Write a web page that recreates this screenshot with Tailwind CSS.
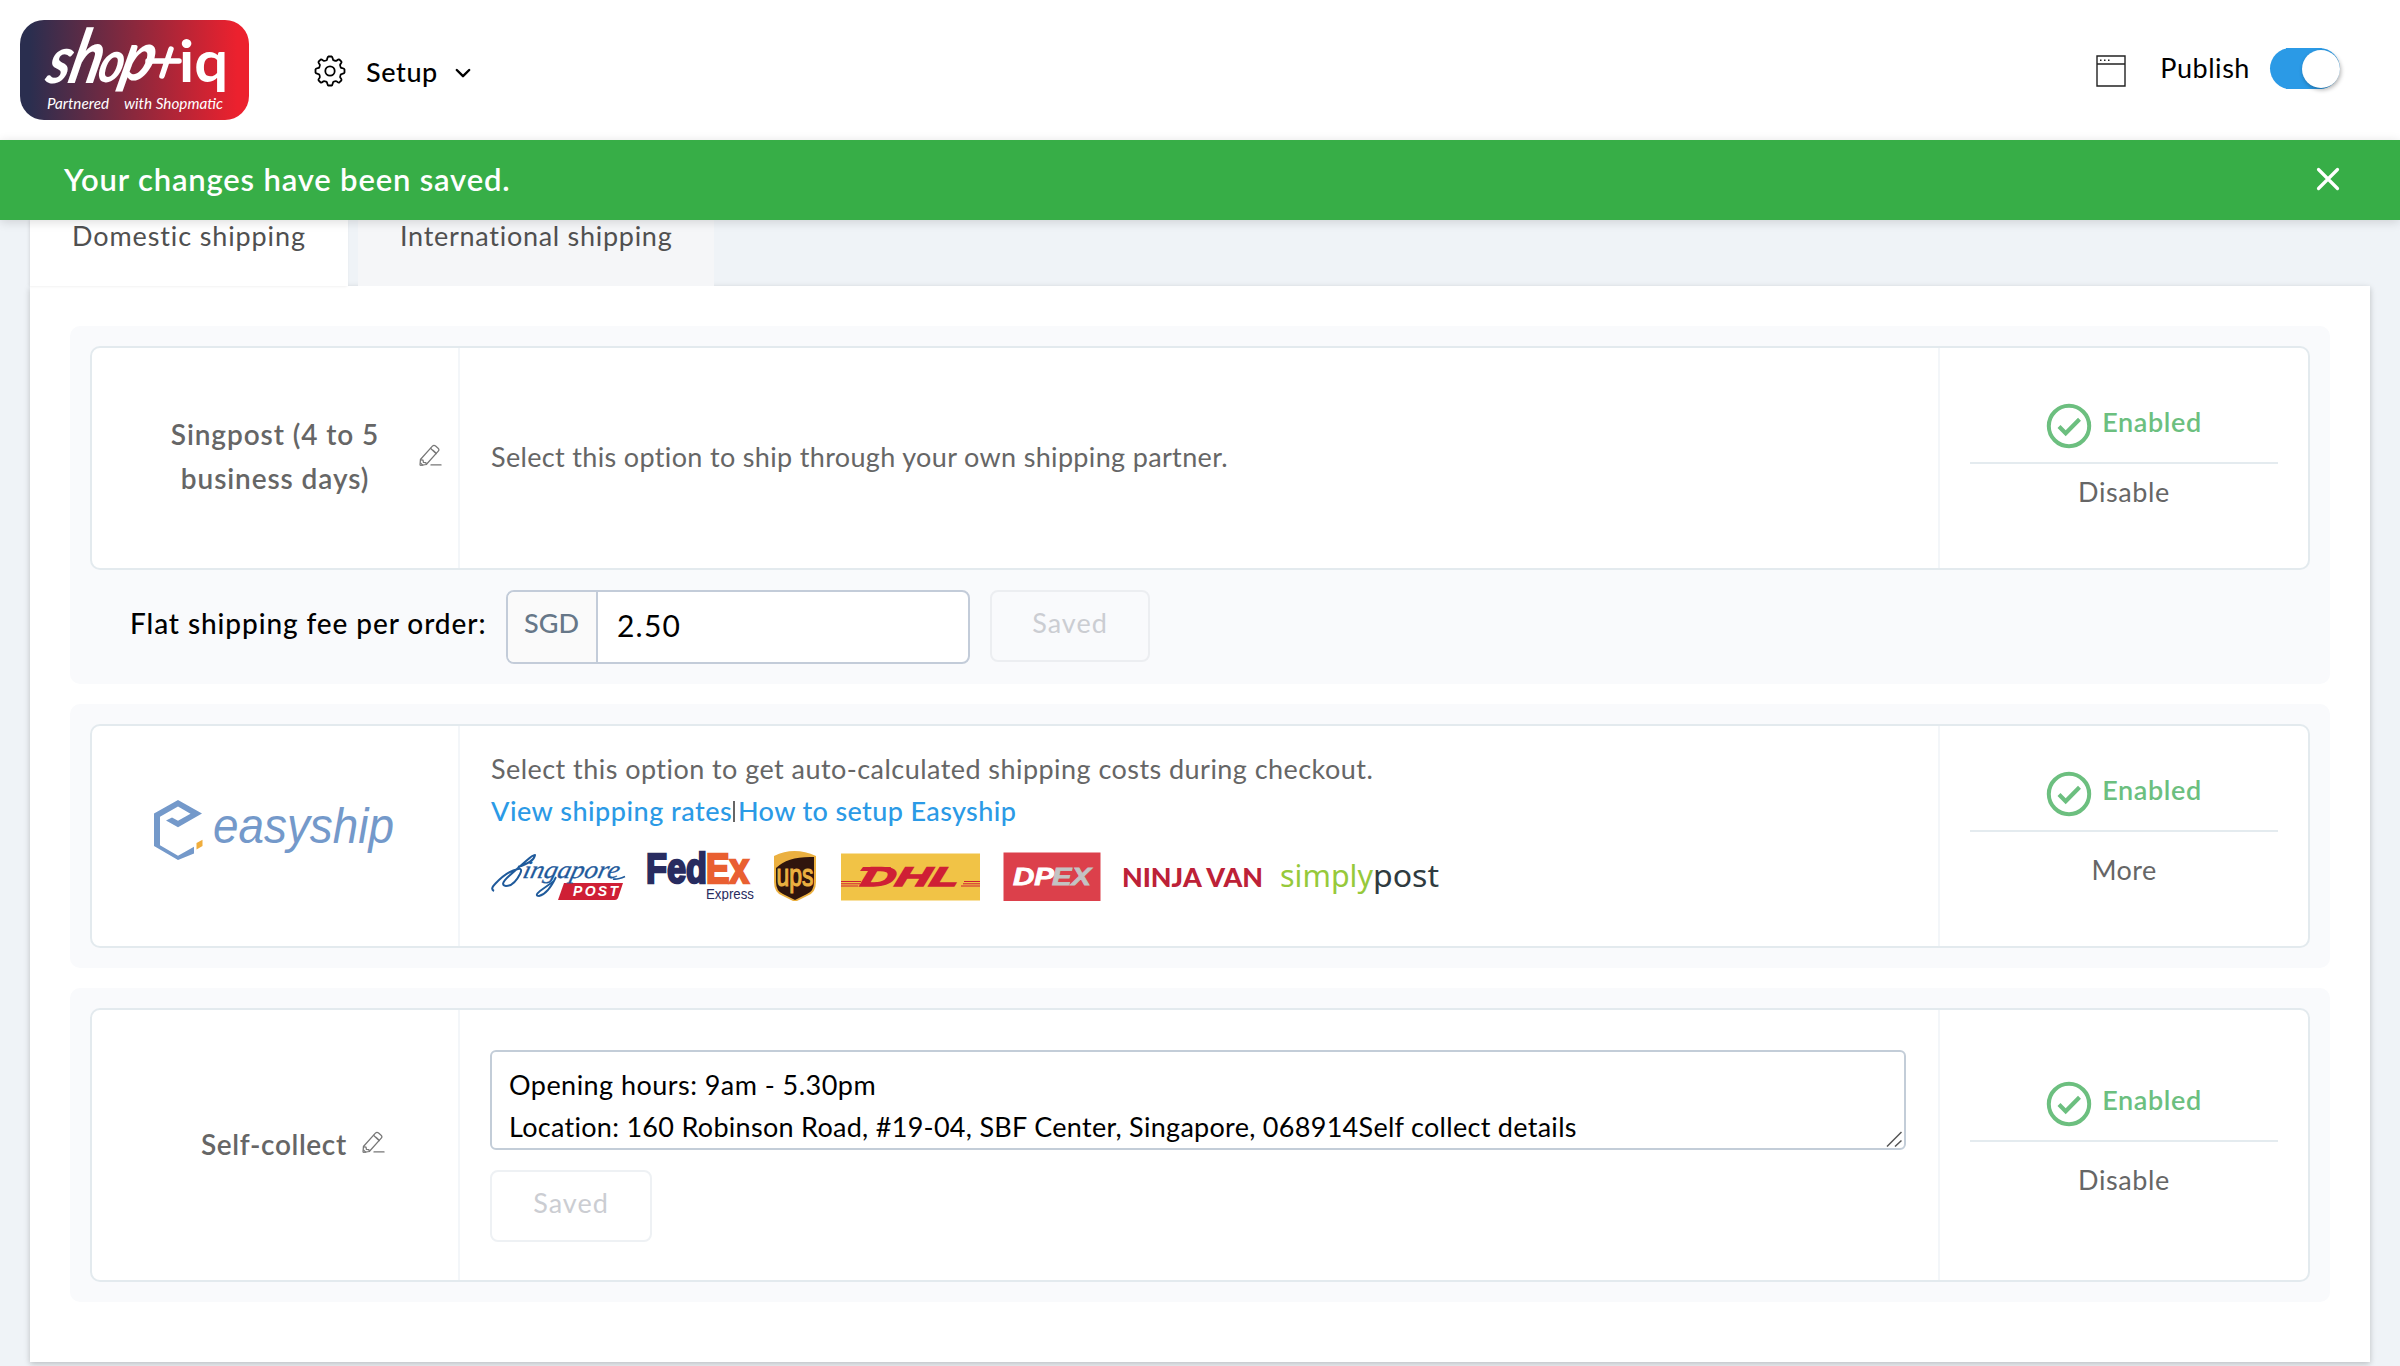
<!DOCTYPE html>
<html lang="en">
<head>
<meta charset="utf-8">
<title>Shipping setup</title>
<script src="https://cdn.jsdelivr.net/npm/@tailwindcss/browser@4"></script>
</head>
<body class="w-[2400px] h-[1366px] overflow-hidden bg-[#eff3f7] font-[Lato,sans-serif] text-[27px] leading-[42px] text-[#666]">

<!-- shared icons -->
<svg class="hidden">
  <symbol id="pencil" viewBox="0 0 24 24">
    <g fill="none" stroke="#777" stroke-width="1.3" stroke-linejoin="round" stroke-linecap="round">
      <path d="M1.5 16.2 14 2.2q1.6-1.6 3.3-.1l2.6 2.3q1.6 1.5.2 3.1L7.6 21.4l-5.8.9q-.8 0-.7-.8z"/>
      <path d="M12 4.500l6 5.600M14.600 6.600l3.400 3M2 16.600l2.200.3.400 2.200 2.600.3.300 2M1.800 20l2 2M12.500 21.800h10.500"/>
    </g>
  </symbol>
  <symbol id="check" viewBox="0 0 46 46">
    <circle cx="23" cy="23" r="20.2" fill="none" stroke="#6cbf7f" stroke-width="4"/>
    <path d="M13 23.5l6.7 6.7L33.5 16.3" fill="none" stroke="#6cbf7f" stroke-width="4.2"/>
  </symbol>
</svg>

<header class="h-[140px] bg-white flex items-start">
  <svg class="ml-5 mt-5 w-[229px] h-[100px] shrink-0" viewBox="20 20 229 100">
    <defs><linearGradient id="lg"><stop offset=".04" stop-color="#2a2e4f"/><stop offset=".5" stop-color="#8b283d"/><stop offset=".95" stop-color="#ec212e"/></linearGradient></defs>
    <rect x="20" y="20" width="229" height="100" rx="24" fill="url(#lg)"/>
    <g fill="#fff" font-family="Lato, sans-serif">
      <g font-style="italic" font-weight="700" transform="translate(20 0) skewX(-14)">
        <text x="45" y="83" font-size="66" textLength="23" lengthAdjust="spacingAndGlyphs">s</text>
        <text x="67" y="83" font-size="75" textLength="32" lengthAdjust="spacingAndGlyphs">h</text>
        <text x="96" y="82" font-size="58" textLength="25" lengthAdjust="spacingAndGlyphs">o</text>
        <text x="118" y="80" font-size="68" textLength="33" lengthAdjust="spacingAndGlyphs">p</text>
      </g>
      <path d="M148 61h31M171 49l-9 27" stroke="#fff" stroke-width="5.500" stroke-linecap="round" fill="none"/>
      <text x="179" y="82" font-size="58" font-weight="700" textLength="49" lengthAdjust="spacingAndGlyphs">iq</text>
      <text x="47" y="108.500" font-size="15.500" font-style="italic" textLength="62" lengthAdjust="spacingAndGlyphs">Partnered</text>
      <text x="124" y="108.500" font-size="15.500" font-style="italic" textLength="99" lengthAdjust="spacingAndGlyphs">with Shopmatic</text>
    </g>
  </svg>
  <svg class="ml-[65px] mt-[55px] size-8 shrink-0" viewBox="0 0 32 32" fill="none" stroke="#000" stroke-width="1.800">
    <path d="M12.600 5.200C13.400 4.800 13 1.800 14.500 1.500h3C19 1.800 18.600 4.800 19.400 5.200C21 5.800 21.800 6.200 22.500 5.800C23.600 5 24.200 4 25.400 4.600L27.400 6.600C28.200 7.800 26.600 8.600 26.200 9.500C25.800 10.300 26.300 11.500 26.800 12.600C27.200 13.400 30.200 13 30.500 14.500v3C30.200 19 27.200 18.600 26.800 19.400C26.200 21 25.800 21.800 26.200 22.500C27 23.600 28 24.200 27.400 25.400L25.400 27.400C24.200 28.200 23.400 26.600 22.500 26.200C21.700 25.800 20.500 26.300 19.400 26.800C18.600 27.200 19 30.200 17.500 30.500h-3C13 30.200 13.400 27.200 12.600 26.800C11 26.200 10.200 25.800 9.500 26.200C8.400 27 7.800 28 6.600 27.400L4.600 25.400C3.800 24.200 5.400 23.400 5.800 22.500C6.200 21.700 5.700 20.500 5.200 19.400C4.800 18.600 1.800 19 1.500 17.500v-3C1.800 13 4.800 13.400 5.200 12.600C5.800 11 6.200 10.200 5.800 9.500C5 8.400 4 7.800 4.600 6.600L6.600 4.600C7.800 3.800 8.600 5.400 9.500 5.800C10.300 6.200 11.500 5.700 12.600 5.200z"/>
    <circle cx="16" cy="16" r="4.700"/>
  </svg>
  <span class="ml-5 mt-[51px] text-black font-medium text-[27px] tracking-[0.6px]">Setup</span>
  <svg class="ml-[17px] mt-[67px] w-4 h-3" viewBox="0 0 16 12" fill="none" stroke="#000" stroke-width="2.400" stroke-linecap="round" stroke-linejoin="round"><path d="M1.800 3l6.200 6.200L14.200 3"/></svg>
  <div class="flex-1"></div>
  <svg class="mt-[55px] w-[30px] h-8" viewBox="0 0 30 32" fill="none" stroke="#222" stroke-width="1.400"><path d="M1 1h28v30H1zM1 9h28"/><path d="M4 5.300h1.500M8 5.300h1.500M12 5.300h1.500" stroke-width="1.600"/></svg>
  <span class="ml-[34px] mt-[47px] text-black text-[27px] tracking-[0.550px]">Publish</span>
  <div class="ml-[20px] mt-12 mr-[60px] w-[70px] h-[41px] flex justify-end items-center rounded-full bg-linear-to-r from-[#2b9ae6] from-75% to-transparent to-75%">
    <div class="w-[54px] h-[41px] -ml-8 rounded-r-full bg-[#2b9ae6] mr-[-38px]"></div>
    <div class="size-[38px] rounded-full bg-white shadow-[1px_2px_4px_rgba(0,0,0,0.3)] shrink-0"></div>
  </div>
</header>

<div class="relative z-10 h-20 bg-[#37ae47] shadow-[0_2px_10px_rgba(0,0,0,0.14)] flex items-center justify-between pl-16 pr-[60px] text-white">
  <span class="text-[31px] font-semibold tracking-[0.82px] -mt-[3px]">Your changes have been saved.</span>
  <svg class="size-6 -mt-[3px]" viewBox="0 0 24 24" stroke="#fff" stroke-width="3.200" stroke-linecap="round"><path d="M2.500 2.500l19 19M21.500 2.500l-19 19"/></svg>
</div>

<nav class="h-[66px] ml-[30px] flex gap-[10px] text-[#505050]">
  <div class="w-[318px] bg-white pl-[42px] shadow-[-1px_0_3px_rgba(0,0,0,0.1)]"><span class="block -mt-[5px] tracking-[0.880px]">Domestic shipping</span></div>
  <div class="w-[356px] bg-[#f5f6f8] pl-[42px]"><span class="block -mt-[5px] tracking-[0.72px]">International shipping</span></div>
</nav>

<main class="mx-[30px] h-[1076px] bg-white shadow-[0_2px_6px_rgba(0,0,0,0.22)] px-10 pt-10 flex flex-col gap-5">

  <section class="h-[358px] bg-[#f9fafc] rounded-[10px] p-5 shrink-0">
    <div class="h-[224px] flex rounded-[10px] border-2 border-[#e3eaee] bg-white overflow-hidden">
      <div class="w-[368px] border-r-2 border-[#f3f6f9] flex items-center relative">
        <p class="w-full -mt-[5px] text-center text-[28px] leading-[44px] font-semibold tracking-[0.9px]">Singpost (4 to 5<br>business days)</p>
        <svg class="absolute left-[327px] top-[96px] w-[23px] h-[23px]"><use href="#pencil"/></svg>
      </div>
      <div class="flex-1 pl-[31px] flex items-center"><span class="-mt-[3px] tracking-[0.34px]">Select this option to ship through your own shipping partner.</span></div>
      <div class="w-[370px] border-l-2 border-[#f3f6f9] px-[30px] pt-[46px] text-center">
        <div class="h-[70px] border-b-2 border-[#e4ebef] flex justify-center items-start gap-[10px] text-[#6cbf7f] font-semibold tracking-[0.6px]"><svg class="size-[46px] mt-[9px]"><use href="#check"/></svg><span class="mt-[7px]">Enabled</span></div>
        <div class="mt-[7px] tracking-[0.6px]">Disable</div>
      </div>
    </div>
    <div class="mt-5 ml-[40px] flex items-start">
      <span class="w-[376px] mt-[12px] text-[28px] font-medium text-black tracking-[0.92px]">Flat shipping fee per order:</span>
      <div class="w-[464px] h-[74px] flex rounded-[8px] border-2 border-[#c3ccd9] bg-white overflow-hidden">
        <div class="w-[90px] bg-[#fafafa] border-r-2 border-[#c3ccd9] text-[#667788] text-center font-medium pt-[10px] pr-px">SGD</div>
        <div class="pl-[19px] pt-[12px] text-black text-[30px] tracking-[1.200px]">2.50</div>
      </div>
      <div class="ml-5 w-40 h-[72px] rounded-[8px] border-2 border-[#eceef1] text-[#cbcdd2] text-center pt-[10px] tracking-[1px]">Saved</div>
    </div>
  </section>

  <section class="h-[264px] bg-[#f9fafc] rounded-[10px] p-5 shrink-0">
    <div class="h-[224px] flex rounded-[10px] border-2 border-[#e3eaee] bg-white overflow-hidden">
      <div class="w-[368px] border-r-2 border-[#f3f6f9] pl-[62px] pt-[74px]">
        <svg class="w-[242px] h-[62px]" viewBox="154 800 242 62">
          <path fill="#7499ca" d="M178 800l24 13.500-24 13.800-12-6.800 6-3 6 3.200 12.500-7-12.500-7.200-18 10.300v28.400l18 10.600 16-9v6.700L178 860l-24-14v-32.500z"/>
          <path fill="#f0ad3c" d="M196.500 843l6-3.300v6.300l-6 3.400z"/>
          <text x="213" y="843" font-family="'Liberation Sans', sans-serif" font-style="italic" font-size="50" fill="#7499ca" textLength="181" lengthAdjust="spacingAndGlyphs">easyship</text>
        </svg>
      </div>
      <div class="flex-1 pl-[31px] pt-[22px]">
        <div class="tracking-[0.45px]">Select this option to get auto-calculated shipping costs during checkout.</div>
        <div class="flex"><span class="text-[#2b9ae6] font-medium tracking-[0.500px] w-[242px]">View shipping rates</span><span class="w-[5px] mt-[11px] mb-[10px]"><span class="block w-[2px] h-full bg-[#666]"></span></span><span class="text-[#2b9ae6] font-medium tracking-[0.370px]">How to setup Easyship</span></div>
        <svg class="mt-[17px] -ml-px w-[950px] h-[52px]" viewBox="490 850 950 52">
          <g font-family="'Liberation Sans', sans-serif" font-weight="700">
            <!-- Singapore Post -->
            <path fill="#cf1f35" d="M564 884h59l-5 15q-1 2-3 2h-57z"/>
            <path d="M494 892q-4-2 1-7q12-13 23-15q5-1 2 5q-6 12-14 12q-7-1 3-10l17-15q8-7 9-6q-1 7-17 12" fill="none" stroke="#1f5a9b" stroke-width="2"/>
            <text x="521" y="879" font-family="'Liberation Serif', serif" font-weight="400" font-style="italic" font-size="25" fill="#1f5a9b" stroke="#1f5a9b" stroke-width=".3" textLength="96" lengthAdjust="spacingAndGlyphs" transform="translate(220 0) skewX(-14)">ingapore</text>
            <path d="M613 880q4 1 12-2.500M556 878q-8 17-17 19q-5 0 1-5l14-10" fill="none" stroke="#1f5a9b" stroke-width="1.800"/>
            <text x="573" y="897" font-style="italic" font-size="14" fill="#fff" textLength="45">POST</text>
            <!-- FedEx -->
            <text x="646" y="884" font-size="43" fill="#282c60" stroke="#282c60" stroke-width="2.400" textLength="61" lengthAdjust="spacingAndGlyphs">Fed</text>
            <text x="706" y="884" font-size="43" fill="#e95f31" stroke="#e95f31" stroke-width="2.400" textLength="43" lengthAdjust="spacingAndGlyphs">Ex</text>
            <text x="706" y="900" font-size="15" font-weight="400" fill="#282c60" textLength="48" lengthAdjust="spacingAndGlyphs">Express</text>
            <!-- UPS -->
            <path fill="#ebb040" d="M774 857q20-10 42 0v26q0 11-9 14l-12 6-12-6q-9-3-9-14z"/>
            <path fill="#30150d" d="M776 869q12-12 38-11v25q0 9-7 12l-12 6-12-6q-7-3-7-12z"/>
            <text x="776.500" y="886.500" font-size="32" font-weight="400" fill="#ebb040" stroke="#ebb040" stroke-width="1.200" textLength="37" lengthAdjust="spacingAndGlyphs">ups</text>
            <!-- DHL -->
            <rect x="841" y="854.500" width="139" height="47" fill="#f1c346"/>
            <path stroke="#cf1f35" stroke-width="1" d="M841 882.500h20M841 884.800h19M841 887h17M964 882.500h16M963 884.800h17M961 887h19"/>
            <text x="860" y="887" font-style="italic" font-size="27" fill="#cf1f35" stroke="#cf1f35" stroke-width="1.400" textLength="98" lengthAdjust="spacingAndGlyphs" transform="translate(237 0) skewX(-15)">DHL</text>
            <path fill="#cf1f35" d="M863 868h28l-2 4h-29z"/>
            <!-- DPEX -->
            <rect x="1003.500" y="853.500" width="97" height="49" fill="#dc404b"/>
            <g font-style="italic" font-size="23.500" stroke-width=".8"><text x="1013" y="885.500" fill="#fff" stroke="#fff" textLength="41" lengthAdjust="spacingAndGlyphs">DP</text>
            <text x="1052" y="885.500" fill="#c3c3c3" stroke="#c3c3c3" textLength="39" lengthAdjust="spacingAndGlyphs">EX</text></g>
            <!-- Ninja Van -->
            <text x="1122" y="887.500" font-family="Lato, sans-serif" font-weight="900" font-size="27" fill="#bd2137" textLength="141" lengthAdjust="spacingAndGlyphs">NINJA VAN</text>
            <!-- simplypost -->
            <g font-family="'Noto Sans', sans-serif" font-weight="400" font-size="31"><text x="1280" y="887.500" fill="#96c93b" textLength="93" lengthAdjust="spacingAndGlyphs">simply</text>
            <text x="1373" y="887.500" fill="#2f3b40" textLength="66" lengthAdjust="spacingAndGlyphs">post</text></g>
          </g>
        </svg>
      </div>
      <div class="w-[370px] border-l-2 border-[#f3f6f9] px-[30px] pt-[36px] text-center">
        <div class="h-[70px] border-b-2 border-[#e4ebef] flex justify-center items-start gap-[10px] text-[#6cbf7f] font-semibold tracking-[0.6px]"><svg class="size-[46px] mt-[9px]"><use href="#check"/></svg><span class="mt-[7px]">Enabled</span></div>
        <div class="mt-[17px] tracking-[0.4px]">More</div>
      </div>
    </div>
  </section>

  <section class="h-[314px] bg-[#f9fafc] rounded-[10px] p-5 shrink-0">
    <div class="h-[274px] flex rounded-[10px] border-2 border-[#e3eaee] bg-white overflow-hidden">
      <div class="w-[368px] border-r-2 border-[#f3f6f9] flex items-center pl-[109px] gap-[15px] text-[28px] font-semibold tracking-[0.63px]">
        <span class="-mt-[3px]">Self-collect</span>
        <svg class="w-[23px] h-[23px] -mt-[5px]"><use href="#pencil"/></svg>
      </div>
      <div class="flex-1 pl-[30px] pt-10">
        <div class="relative w-[1416px] h-[100px] rounded-[6px] border-2 border-[#c3cdd8] pl-[17px] pt-[12px] text-black">
          <div class="tracking-[0.46px]">Opening hours: 9am - 5.30pm</div>
          <div class="tracking-[0.29px]">Location: 160 Robinson Road, #19-04, SBF Center, Singapore, 068914Self collect details</div>
          <svg class="absolute right-[2px] bottom-[1px] size-4" viewBox="0 0 16 16" stroke="#555" stroke-width="1.500"><path d="M1 15.500L15.500 1M9 15.500L15.500 9.500"/></svg>
        </div>
        <div class="mt-5 w-[162px] h-[72px] rounded-[8px] border-2 border-[#eef1f4] text-[#cbcdd2] text-center pt-[10px] tracking-[1px]">Saved</div>
      </div>
      <div class="w-[370px] border-l-2 border-[#f3f6f9] px-[30px] pt-[62px] text-center">
        <div class="h-[70px] border-b-2 border-[#e4ebef] flex justify-center items-start gap-[10px] text-[#6cbf7f] font-semibold tracking-[0.6px]"><svg class="size-[46px] mt-[9px]"><use href="#check"/></svg><span class="mt-[7px]">Enabled</span></div>
        <div class="mt-[17px] tracking-[0.6px]">Disable</div>
      </div>
    </div>
  </section>
</main>
</body>
</html>
